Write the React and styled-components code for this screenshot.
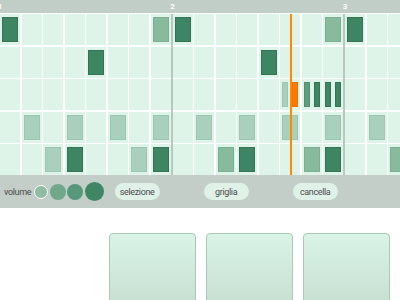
import styled, { createGlobalStyle } from 'styled-components';

const GlobalStyle = createGlobalStyle`
	body {
		margin: 0;
		background: #ffffff;
		font-family: Roboto, "Liberation Sans", sans-serif;
	}
`;

// one entry per row, 8 columns each. arrays = cell split in two
const measures = [
	[
		['d', 0, 0, 0, 0, 0, 0, 'm'],
		[0, 0, 0, 0, 'd', 0, 0, 0],
		[0, 0, 0, 0, 0, 0, 0, 0],
		[0, 'l', 0, 'l', 0, 'l', 0, 'l'],
		[0, 0, 'l', 'd', 0, 0, 'l', 'd'],
	],
	[
		['d', 0, 0, 0, 0, 0, 0, 'm'],
		[0, 0, 0, 0, 'd', 0, 0, 0],
		[0, 0, 0, 0, 0, ['l', 'o'], ['s', 'd'], ['d', 'd']],
		[0, 'l', 0, 'l', 0, 'l', 0, 'l'],
		[0, 0, 'm', 'd', 0, 0, 'm', 'd'],
	],
	[
		['d', 0, 0, 0, 0, 0, 0, 0],
		[0, 0, 0, 0, 0, 0, 0, 0],
		[0, 0, 0, 0, 0, 0, 0, 0],
		[0, 'l', 0, 'l', 0, 'l', 0, 'l'],
		[0, 0, 'm', 'd', 0, 0, 'm', 'd'],
	],
];

const volumes = [
	{ size: 14, color: '#8fbda3', ring: true },
	{ size: 16, color: '#70a889' },
	{ size: 16, color: '#58987a' },
	{ size: 19, color: '#3e8664' },
];

const tools = ['selezione', 'griglia', 'cancella'];

const App = () => {
	return (
		<>
			<GlobalStyle />
			<Page>
				<Ruler>
					{measures.map((m, i) => (
						<RulerSegment key={i}>
							<RulerNumber>{i + 1}</RulerNumber>
						</RulerSegment>
					))}
				</Ruler>
				<GridWrap>
					<Measures>
						{measures.map((rows, mi) => (
							<Measure key={mi}>
								{rows.map((row, ri) =>
									row.map((cell, ci) => (
										<Cell key={ri + '-' + ci} $split={Array.isArray(cell)}>
											{Array.isArray(cell)
												? cell.map((t, k) => <Note key={k} $tone={t} $small />)
												: cell ? <Note $tone={cell} /> : null}
										</Cell>
									))
								)}
							</Measure>
						))}
					</Measures>
					<Playhead />
				</GridWrap>
				<Controls>
					<VolumeLabel>volume</VolumeLabel>
					<Dots>
						{volumes.map((v, i) => (
							<Dot key={i} $size={v.size} $color={v.color} $ring={v.ring} />
						))}
					</Dots>
					<Tools>
						{tools.map((t) => (
							<Pill key={t}>{t}</Pill>
						))}
					</Tools>
				</Controls>
				<Tray>
					<Card />
					<Card />
					<Card />
					<Card />
				</Tray>
			</Page>
		</>
	);
};

const toneColors = {
	d: ['#3e8563', '#337455'],
	m: ['#88ba9e', '#7bae92'],
	l: ['#a9d0bc', '#9dc6b1'],
	s: ['#5e9d7d', '#52906f'],
	o: ['#ff7c00', '#f07000'],
};

const Page = styled.div`
	width: 400px;
	height: 300px;
	overflow: hidden;
	background: #ffffff;
`;

const Ruler = styled.div`
	display: flex;
	height: 13px;
	background: #c1cec7;
	border-bottom: 1px solid #ffffff;
	overflow: hidden;
`;
const RulerSegment = styled.div`
	flex: 0 0 172.5px;
	position: relative;
`;
const RulerNumber = styled.span`
	display: block;
	width: 8px;
	margin-left: -4px;
	text-align: center;
	padding-top: 2px;
	font-size: 8px;
	font-weight: 700;
	line-height: 9px;
	color: #ffffff;
`;

const GridWrap = styled.div`
	position: relative;
	overflow: hidden;
`;
const Measures = styled.div`
	display: flex;
`;
const Measure = styled.div`
	flex: 0 0 auto;
	display: grid;
	grid-template-columns: repeat(8, 20px);
	grid-auto-rows: 31px;
	gap: 1.5px;
	background: #ffffff;
	border-right: 2px solid #b9c7bf;
`;
const Cell = styled.div`
	display: flex;
	justify-content: space-between;
	padding: 3px 2px;
	box-sizing: border-box;
	background: #dff4e8;
`;
const Note = styled.div`
	flex: ${(p) => (p.$small ? '0 0 6px' : '1')};
	box-sizing: border-box;
	background: ${(p) => toneColors[p.$tone][0]};
	border: 1px solid ${(p) => toneColors[p.$tone][1]};
`;
const Playhead = styled.div`
	position: absolute;
	top: 0;
	bottom: 0;
	left: 290px;
	width: 1.5px;
	background: #ff8a00;
`;

const Controls = styled.div`
	display: flex;
	align-items: center;
	height: 33px;
	padding-left: 4px;
	background: #c2cec7;
`;
const VolumeLabel = styled.span`
	font-size: 9px;
	letter-spacing: -0.35px;
	color: #4b4b4b;
	margin-right: 3px;
`;
const Dots = styled.div`
	display: flex;
	align-items: center;
	gap: 1.5px;
`;
const Dot = styled.div`
	width: ${(p) => p.$size}px;
	height: ${(p) => p.$size}px;
	box-sizing: border-box;
	border-radius: 50%;
	background: ${(p) => p.$color};
	border: ${(p) => (p.$ring ? '1.5px solid #ffffff' : 'none')};
`;
const Tools = styled.div`
	display: flex;
	gap: 44px;
	margin-left: 11px;
`;
const Pill = styled.button`
	width: 45px;
	height: 17px;
	padding: 0;
	border: none;
	border-radius: 9px;
	background: #e0f2e8;
	font-family: Roboto, "Liberation Sans", sans-serif;
	font-size: 9px;
	letter-spacing: -0.35px;
	color: #4b4b4b;
	cursor: pointer;
`;

const Tray = styled.div`
	display: flex;
	gap: 10px;
	padding: 25px 0 0 109px;
	overflow: hidden;
`;
const Card = styled.div`
	flex: 0 0 87px;
	height: 90px;
	box-sizing: border-box;
	border: 1px solid #a8cab7;
	border-radius: 4px;
	background: linear-gradient(#d9f3e6, #c2dbcd);
`;

export default App;
